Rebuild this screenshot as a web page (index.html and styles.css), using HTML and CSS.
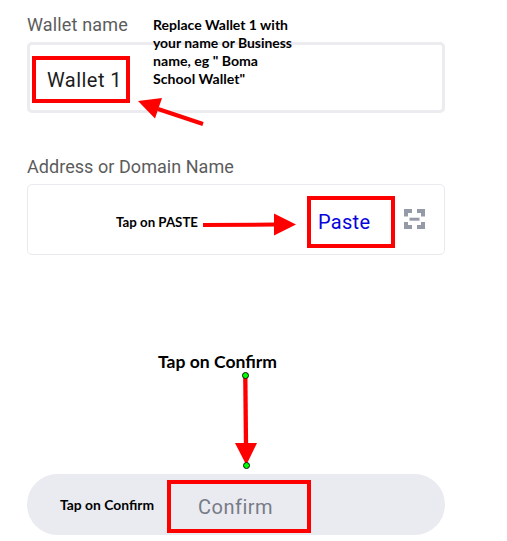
FILE: index.html
```html
<!DOCTYPE html>
<html lang="en">
<head>
<meta charset="utf-8">
<title>Add wallet</title>
<link rel="stylesheet" href="styles.css">
</head>
<body>
<main class="guide">
  <form class="form">
    <div class="label label-name">Wallet name</div>
    <div class="field field-name"><span class="mark mark-name"><span class="value">Wallet 1</span></span></div>
    <div class="label label-address">Address or Domain Name</div>
    <div class="field field-address">
      <span class="mark mark-paste"><span class="paste">Paste</span></span>
      <svg class="scan" viewBox="0 0 21 20" fill="none" stroke="#959ba6" stroke-width="4">
        <path d="M2 7.500V2H8M13 2h6v5.500M19 13v5h-6M8 18H2v-5"/>
        <path d="M5.500 10.200h10" stroke-width="3"/>
      </svg>
    </div>
    <div class="button"><span class="mark mark-confirm"><span class="confirm">Confirm</span></span></div>
  </form>
  <svg class="notes" viewBox="0 0 507 541">
    <g class="note">
      <text x="153" y="30" textLength="135" lengthAdjust="spacingAndGlyphs">Replace Wallet 1 with</text>
      <text x="153" y="48" textLength="139" lengthAdjust="spacingAndGlyphs">your name or Business</text>
      <text x="153" y="66" textLength="105" lengthAdjust="spacingAndGlyphs">name, eg " Boma</text>
      <text x="153" y="84" textLength="92" lengthAdjust="spacingAndGlyphs">School Wallet"</text>
      <text x="116" y="227" textLength="82" lengthAdjust="spacingAndGlyphs">Tap on PASTE</text>
      <text x="60" y="510" textLength="94" lengthAdjust="spacingAndGlyphs">Tap on Confirm</text>
      <text class="large" x="158" y="368" textLength="119" lengthAdjust="spacingAndGlyphs">Tap on Confirm</text>
    </g>
    <g class="arrows">
      <path d="M203 124 158 109" stroke-width="4"/>
      <path class="head" d="M138 101 162 98 155 118.500Z"/>
      <path d="M203 225 275 224.500" stroke-width="4"/>
      <path class="head" d="M296 224.500 274 213.500V235.500Z"/>
      <path d="M245.300 376 246 445" stroke-width="4.300"/>
      <path class="head" d="M235 443H257L246.300 465Z"/>
    </g>
    <g class="handles">
      <circle cx="245.500" cy="375.500" r="3"/>
      <circle cx="246.500" cy="465.500" r="3"/>
    </g>
  </svg>
</main>
</body>
</html>
```
FILE: styles.css
```css
* { box-sizing: border-box; }
body { margin: 0; background: #fff; font-family: Roboto, "Liberation Sans", sans-serif; }
.guide { position: relative; width: 507px; height: 541px; overflow: hidden; }
.form { width: 418px; margin-left: 27px; padding-top: 13px; }
.label { height: 24px; line-height: 24px; font-size: 18px; color: #5c5c5c; white-space: nowrap; }
.label-name { letter-spacing: .15px; }
.field { display: flex; height: 71px; border-radius: 5px; }
.field-name { height: 71px; margin-top: 5px; padding: 11px 0 0 2px; border: 3px solid #ebebf0; }
.label-address { margin-top: 42px; letter-spacing: .05px; }
.field-address { margin-top: 5px; padding: 11px 0 0 279px; border: 1px solid #e9eaee; }
.mark { display: flex; flex: none; align-items: center; border: 4px solid #f00; white-space: nowrap; }
.mark-name { width: 98px; height: 47px; padding-left: 11px; }
.value { font-size: 20px; color: #1c1c1c; letter-spacing: .45px; }
.mark-paste { width: 88px; height: 52px; padding: 0 0 1px 7px; }
.paste { font-size: 20px; color: #0804dc; letter-spacing: .3px; }
.scan { width: 21px; height: 20px; margin: 13px 0 0 9px; }
.button { display: flex; height: 61px; margin-top: 219px; padding: 6px 0 0 140px; border-radius: 31px; background: #eaebf0; }
.mark-confirm { width: 144px; height: 53px; padding-left: 27px; }
.confirm { font-size: 20px; color: #777b87; letter-spacing: .5px; }
.notes { position: absolute; inset: 0; width: 507px; height: 541px; }
.note { font: 700 14px Lato, sans-serif; fill: #000; }
.large { font-size: 17.5px; }
.arrows { fill: none; stroke: #f00; }
.head { fill: #f00; stroke: none; }
.handles { fill: #0f0; stroke: #111; stroke-width: 1; }
```
